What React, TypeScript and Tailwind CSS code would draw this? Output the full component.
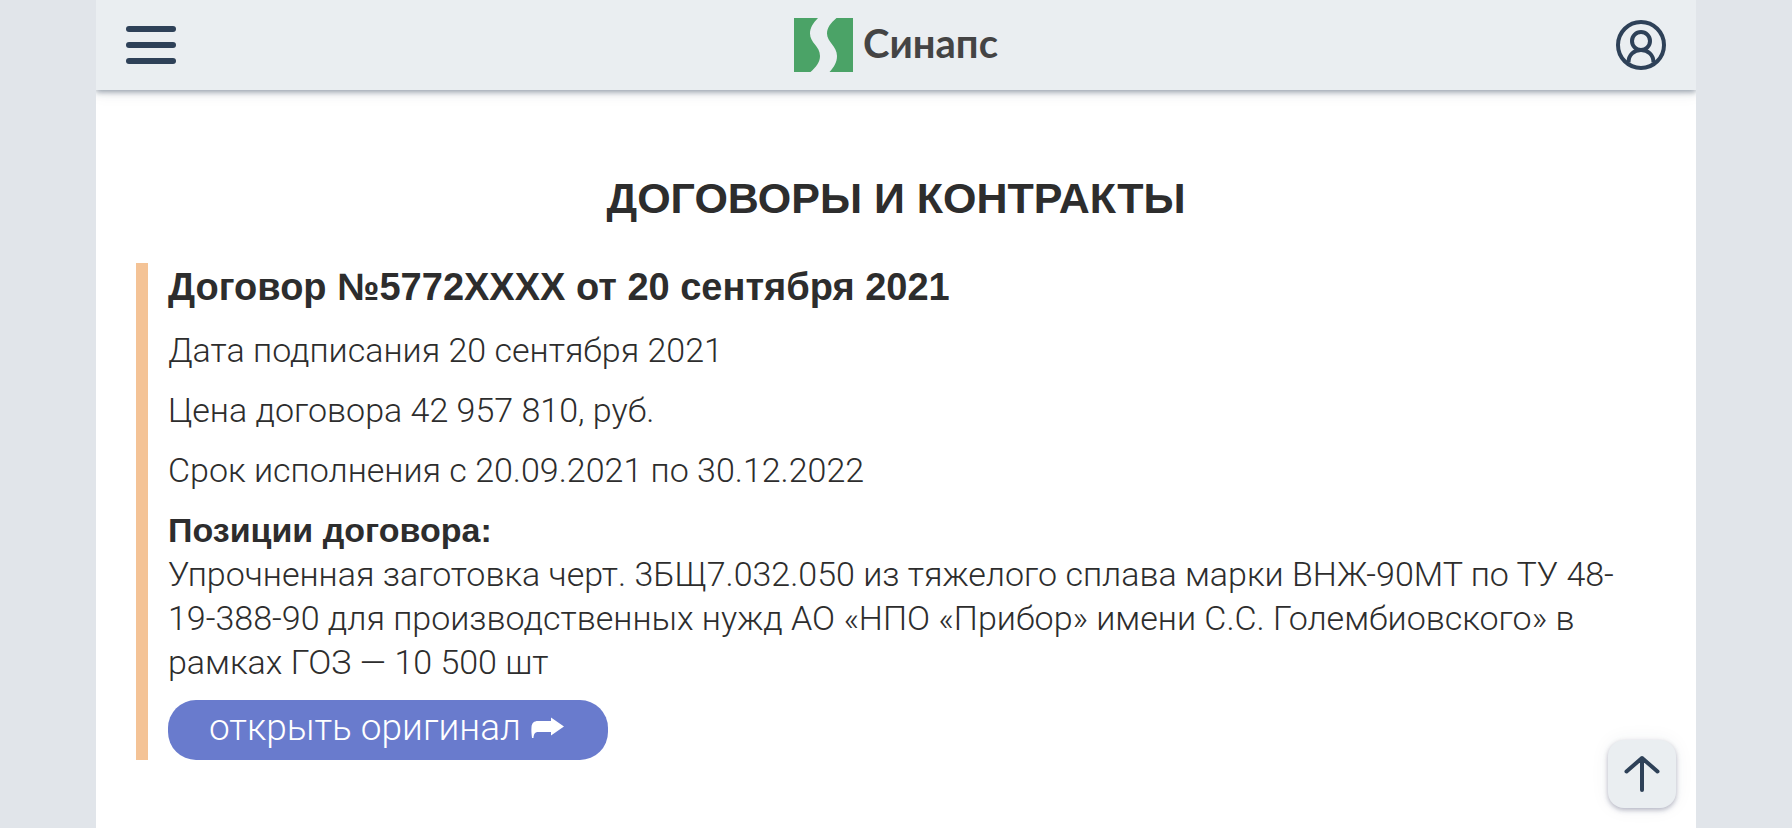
const details = [
  "Дата подписания 20 сентября 2021",
  "Цена договора 42 957 810, руб.",
  "Срок исполнения с 20.09.2021 по 30.12.2022",
];

function Logo() {
  return (
    <a href="#" className="flex items-center gap-2.5 text-[#444444]">
      <svg width="59" height="54" viewBox="0 0 59 54" fill="#4ba367" aria-hidden="true">
        <path d="M0 0H24C19 5 16 10 16 15.500C16 25 26 28 26 38C26 44.500 22 49 16.500 54H0Z" />
        <path d="M59 0H42.500C36.500 5 33 10 33 15.500C33 24 43 28 43 38C43 44.500 40 49 35.500 54H59Z" />
      </svg>
      <span className="pb-1 font-['Lato','Noto_Sans',sans-serif] text-[40px] leading-[50px] font-bold">
        Синапс
      </span>
    </a>
  );
}

function Header() {
  return (
    <header className="relative z-10 flex h-[90px] items-center justify-between bg-[#eaeef1] px-[30px] shadow-[0_2px_6px_rgba(46,65,88,0.5),0_4px_16px_rgba(46,65,88,0.06)]">
      <button type="button" aria-label="Меню" className="flex w-[50px] flex-col gap-2.5">
        <span className="h-1.5 w-full rounded-full bg-[#2e4158]" />
        <span className="h-1.5 w-full rounded-full bg-[#2e4158]" />
        <span className="h-1.5 w-full rounded-full bg-[#2e4158]" />
      </button>
      <Logo />
      <a href="#" aria-label="Личный кабинет">
        <svg width="50" height="50" viewBox="0 0 50 50" fill="none" stroke="#2e4158" strokeWidth="4" aria-hidden="true">
          <circle cx="25" cy="25" r="23" />
          <circle cx="25" cy="21" r="9" />
          <path d="M12.500 42.500C12.500 35 18 30 25 30C32 30 37.500 35 37.500 42.500" />
        </svg>
      </a>
    </header>
  );
}

function Contract() {
  return (
    <article className="border-l-[12px] border-[#f4c396] pl-5">
      <h2 className="font-['Liberation_Sans',Arial,sans-serif] text-[38px] leading-[49px] font-bold">
        Договор №5772XXXX от 20 сентября 2021
      </h2>
      {details.map((line) => (
        <p key={line} className="mt-4">
          {line}
        </p>
      ))}
      <h3 className="mt-4 font-['Liberation_Sans',Arial,sans-serif] font-bold">Позиции договора:</h3>
      <p>
        Упрочненная заготовка черт. 3БЩ7.032.050 из тяжелого сплава марки ВНЖ-90МТ по ТУ 48-19-388-90 для
        производственных нужд АО «НПО «Прибор» имени С.С. Голембиовского» в рамках ГОЗ — 10 500 шт
      </p>
      <a
        href="#"
        className="mt-4 flex h-[60px] w-fit items-center gap-2.5 rounded-[28px] bg-[#697bcd] pr-[43px] pl-[41px] text-[37px] leading-[60px] text-white"
      >
        <span className="pb-1 leading-[56px]">открыть оригинал</span>
        <svg width="34" height="22" viewBox="0 0 34 22" fill="currentColor" className="mb-1" aria-hidden="true">
          <path d="M1 21C0.500 17 0.200 13 0.500 10C0.800 6 3 4 7 4H20V0.500L33 9.500L20 18.500V15H7C4 15 2.800 17 2.500 21Z" />
        </svg>
      </a>
    </article>
  );
}

export default function App() {
  return (
    <div className="min-h-screen bg-[#e1e5ea] px-24">
      <div className="relative min-h-screen overflow-hidden bg-white font-['Roboto','Noto_Sans',sans-serif] text-[34px] leading-[44px] font-light text-[#2d2d2d]">
        <Header />
        <main className="px-10 pt-20 pb-16">
          <h1 className="mb-9 text-center font-['Liberation_Sans',Arial,sans-serif] text-[43px] leading-[57px] font-bold uppercase">
            Договоры и контракты
          </h1>
          <Contract />
        </main>
        <button
          type="button"
          aria-label="Наверх"
          className="absolute right-5 bottom-5 flex size-[68px] items-center justify-center rounded-2xl bg-[#eaeef1] shadow-[0_2px_5px_rgba(46,50,88,0.35),0_0_20px_rgba(46,65,88,0.06)]"
        >
          <svg
            width="36"
            height="38"
            viewBox="0 0 36 38"
            fill="none"
            stroke="#2e4158"
            strokeWidth="4"
            strokeLinecap="round"
            strokeLinejoin="round"
            aria-hidden="true"
          >
            <path d="M18 35V3M2.500 16.500L18 3L33.500 16.500" />
          </svg>
        </button>
      </div>
    </div>
  );
}
